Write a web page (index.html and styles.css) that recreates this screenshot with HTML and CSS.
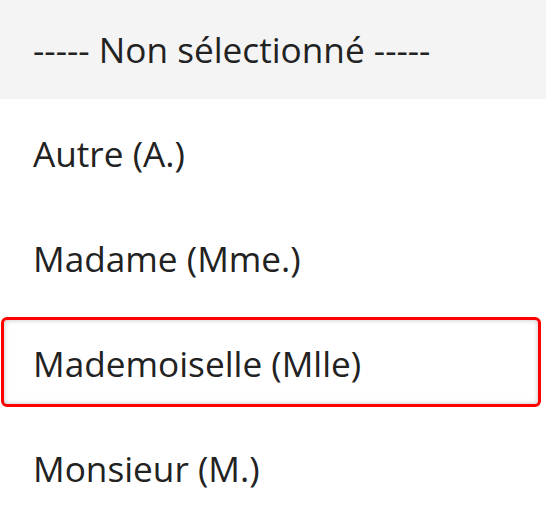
FILE: index.html
```html
<!DOCTYPE html>
<html lang="fr">
<head>
<meta charset="utf-8">
<link rel="stylesheet" href="styles.css">
</head>
<body>
<ul class="options">
  <li class="option option-placeholder">----- Non sélectionné -----</li>
  <li class="option">Autre (A.)</li>
  <li class="option">Madame (Mme.)</li>
  <li class="option option-highlight"><span class="highlight-box"></span>Mademoiselle (Mlle)</li>
  <li class="option">Monsieur (M.)</li>
</ul>
</body>
</html>
```
FILE: styles.css
```css
html, body {
  margin: 0;
  padding: 0;
  background: #ffffff;
}
body {
  width: 546px;
  height: 517px;
  overflow: hidden;
  font-family: "Open Sans", "Noto Sans", sans-serif;
  color: #222222;
}
.options {
  list-style: none;
  margin: 0;
  padding: 0;
}
.option {
  position: relative;
  height: 105px;
  display: flex;
  align-items: center;
  padding-left: 33px;
  font-size: 35.2px;
  font-weight: 380;
  line-height: 1;
}
.option-placeholder {
  height: 99px;
  margin-bottom: 2px;
  background: #f4f4f4;
}
.highlight-box {
  position: absolute;
  left: 1px;
  top: 6px;
  width: 540px;
  height: 90px;
  box-sizing: border-box;
  border: 3px solid #ff0000;
  border-radius: 6px;
  box-shadow: inset 0 0 5px rgba(0,0,0,0.25);
}
```
